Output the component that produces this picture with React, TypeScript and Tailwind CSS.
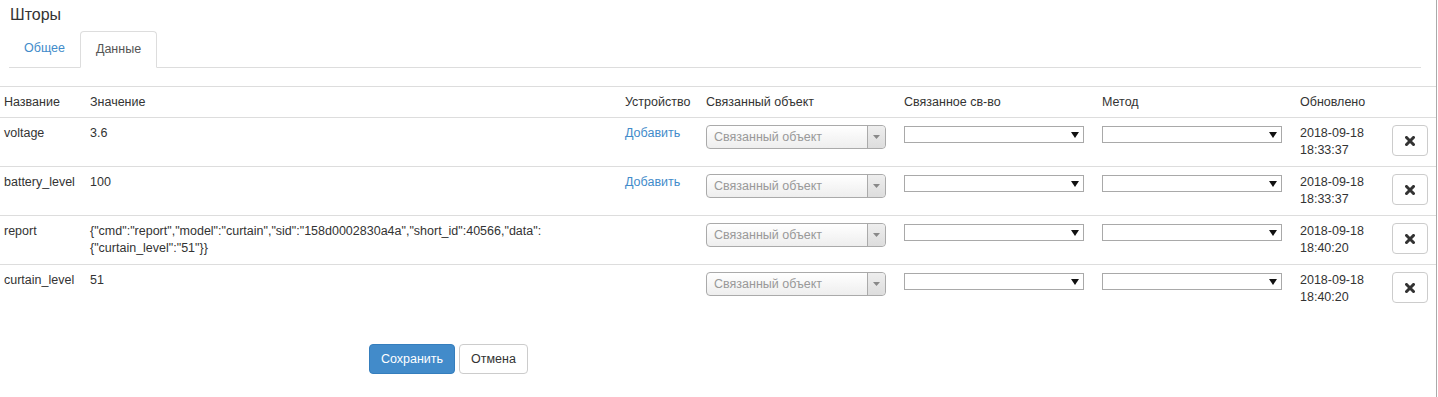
import React from "react";

const rows = [
  { name: "voltage", value: "3.6", device: true, date: "2018-09-18", time: "18:33:37" },
  { name: "battery_level", value: "100", device: true, date: "2018-09-18", time: "18:33:37" },
  {
    name: "report",
    value:
      '{"cmd":"report","model":"curtain","sid":"158d0002830a4a","short_id":40566,"data":{"curtain_level":"51"}}',
    device: false,
    date: "2018-09-18",
    time: "18:40:20",
  },
  { name: "curtain_level", value: "51", device: false, date: "2018-09-18", time: "18:40:20" },
];

const LinkedObject = () => (
  <div className="flex h-[24px] w-[180px] rounded-[4px] border border-[#aaa] bg-gradient-to-b from-white to-[#eee]">
    <span className="flex-1 pl-[7px] leading-[22px] text-[#999] truncate">Связанный объект</span>
    <span className="flex w-[18px] items-center justify-center border-l border-[#aaa] bg-gradient-to-b from-[#eee] to-[#ddd] rounded-r-[4px]">
      <svg width="7" height="4" viewBox="0 0 7 4">
        <path d="M0 0h7L3.5 4z" fill="#888" />
      </svg>
    </span>
  </div>
);

const NativeSelect = () => (
  <div className="mt-[1px] flex h-[17px] w-[180px] items-center justify-end border border-[#a9a9a9] bg-white pr-[4px]">
    <svg width="8" height="6" viewBox="0 0 8 6">
      <path d="M0 0h8L4 6z" fill="#111" />
    </svg>
  </div>
);

const RemoveButton = () => (
  <button className="flex h-[31px] w-[36px] items-center justify-center rounded-[4px] border border-[#ccc] bg-white">
    <svg width="10" height="10" viewBox="0 0 10 10">
      <path d="M1.5 1.5l7 7M8.5 1.5l-7 7" stroke="#333" strokeWidth="3" strokeLinecap="square" />
    </svg>
  </button>
);

export default function App() {
  return (
    <div
      className="min-h-[397px] w-[1437px] border-r border-[#aaa] bg-white text-[12.5px] leading-[17px] text-[#333]"
      style={{ fontFamily: '"Liberation Sans", Arial, sans-serif' }}
    >
      <h3 className="px-[10px] pt-[5px] text-[16px] leading-[20px]">Шторы</h3>

      <div className="ml-[9px] mt-[6px] mr-[15px] flex border-b border-[#ddd]">
        <a className="px-[15px] py-[9px] text-[#428bca]">Общее</a>
        <a className="-mb-px rounded-t-[4px] border border-[#ddd] border-b-white bg-white px-[15px] py-[9px] text-[#555]">
          Данные
        </a>
      </div>

      <table className="mt-[18px] w-[1436px] table-fixed border-collapse">
        <colgroup>
          <col className="w-[86px]" />
          <col className="w-[535px]" />
          <col className="w-[81px]" />
          <col className="w-[198px]" />
          <col className="w-[198px]" />
          <col className="w-[198px]" />
          <col className="w-[92px]" />
          <col className="w-[48px]" />
        </colgroup>
        <thead>
          <tr className="border-y border-[#ddd] text-left">
            <th className="px-[4px] pt-[7px] pb-[6px] font-normal">Название</th>
            <th className="px-[4px] pt-[7px] pb-[6px] font-normal">Значение</th>
            <th className="px-[4px] pt-[7px] pb-[6px] font-normal">Устройство</th>
            <th className="px-[4px] pt-[7px] pb-[6px] font-normal">Связанный объект</th>
            <th className="px-[4px] pt-[7px] pb-[6px] font-normal">Связанное св-во</th>
            <th className="px-[4px] pt-[7px] pb-[6px] font-normal">Метод</th>
            <th className="px-[4px] pt-[7px] pb-[6px] font-normal">Обновлено</th>
            <th className="px-[4px] pt-[7px] pb-[6px]" />
          </tr>
        </thead>
        <tbody>
          {rows.map((r, i) => (
            <tr key={r.name} className={i < rows.length - 1 ? "border-b border-[#ddd] align-top" : "align-top"}>
              <td className="px-[4px] pt-[7px] pb-[7px] whitespace-nowrap">{r.name}</td>
              <td className="px-[4px] pt-[7px] pb-[7px] break-words">{r.value}</td>
              <td className="px-[4px] pt-[7px] pb-[7px]">
                {r.device && <a className="text-[#428bca]">Добавить</a>}
              </td>
              <td className="px-[4px] pt-[7px] pb-[7px]">
                <LinkedObject />
              </td>
              <td className="px-[4px] pt-[7px] pb-[7px]">
                <NativeSelect />
              </td>
              <td className="px-[4px] pt-[7px] pb-[7px]">
                <NativeSelect />
              </td>
              <td className="px-[4px] pt-[7px] pb-[7px]">
                {r.date}
                <br />
                {r.time}
              </td>
              <td className="px-[4px] pt-[7px] pb-[7px]">
                <RemoveButton />
              </td>
            </tr>
          ))}
        </tbody>
      </table>

      <div className="ml-[369px] mt-[31px] flex gap-[4px]">
        <button className="h-[30px] w-[86px] rounded-[4px] border border-[#357ebd] bg-[#428bca] text-white">
          Сохранить
        </button>
        <button className="h-[30px] w-[69px] rounded-[4px] border border-[#ccc] bg-white text-[#333]">
          Отмена
        </button>
      </div>
    </div>
  );
}
